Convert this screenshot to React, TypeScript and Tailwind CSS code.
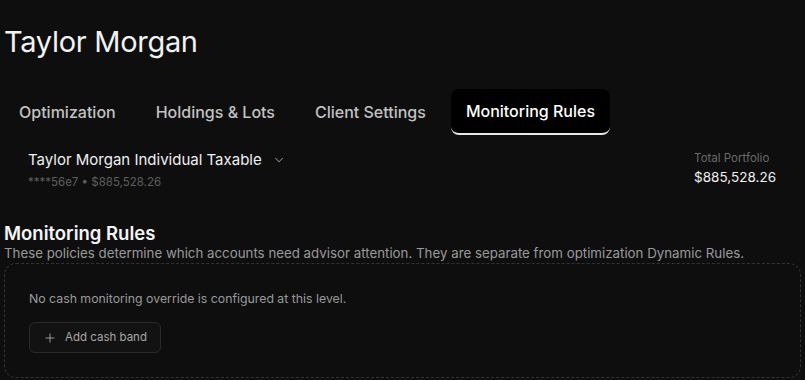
import { ChevronDown, Plus } from 'lucide-react';

const tabs = ['Optimization', 'Holdings & Lots', 'Client Settings', 'Monitoring Rules'];

export default function App() {
    const active = 'Monitoring Rules';

    return (
        <div className="min-h-screen w-full bg-[#0e0e0f] text-white font-['Inter',sans-serif] px-1 overflow-hidden">
            {/* Header */}
            <h1 className="pt-[22px] text-[29px] leading-[40px] font-normal tracking-[-0.3px] text-[#f2f2f2]">
                Taylor Morgan
            </h1>

            {/* Tabs */}
            <nav className="mt-[27px] flex items-center gap-[10px]">
                {tabs.map((tab) => (
                    <button
                        key={tab}
                        className={`h-[46px] px-[15px] rounded-lg text-[16px] font-medium ${
                            tab === active
                                ? 'bg-black text-white border-b-2 border-[#e8e8e8]'
                                : 'text-[#c2c2c2]'
                        }`}
                    >
                        {tab}
                    </button>
                ))}
            </nav>

            {/* Account selector */}
            <div className="mt-[14px] flex items-start justify-between pl-6 pr-[25px]">
                <div>
                    <div className="flex items-center gap-[10px] text-[15px] leading-[22px] text-[#f0f0f0]">
                        Taylor Morgan Individual Taxable
                        <ChevronDown size={14} className="text-[#8a8a8a]" strokeWidth={1.75} />
                    </div>
                    <div className="mt-[4px] text-[11.5px] leading-[14px] text-[#5e5e5e]">****56e7 • $885,528.26</div>
                </div>
                <div className="pt-[2px]">
                    <div className="text-[11.5px] leading-[14px] text-[#6a6a6a]">Total Portfolio</div>
                    <div className="mt-[4px] text-[13.5px] leading-[16px] text-[#f0f0f0]">$885,528.26</div>
                </div>
            </div>

            {/* Monitoring rules */}
            <h2 className="mt-[32px] text-[18.5px] leading-[24px] font-semibold text-[#f5f5f5]">Monitoring Rules</h2>
            <p className="text-[13.3px] leading-[16px] text-[#9a9a9a]">
                These policies determine which accounts need advisor attention. They are separate from optimization Dynamic Rules.
            </p>

            <div className="mt-[2px] rounded-xl border border-dashed border-[#333] px-6 pt-[27px] pb-6">
                <p className="text-[12.3px] leading-[16px] text-[#9a9a9a]">
                    No cash monitoring override is configured at this level.
                </p>
                <button className="mt-[15px] flex h-[31px] items-center gap-[8px] rounded-md border border-[#2a2a2a] bg-[#121212] px-[13px] text-[11.5px] text-[#a8a8a8]">
                    <Plus size={14} strokeWidth={1.5} />
                    Add cash band
                </button>
            </div>
        </div>
    );
}
